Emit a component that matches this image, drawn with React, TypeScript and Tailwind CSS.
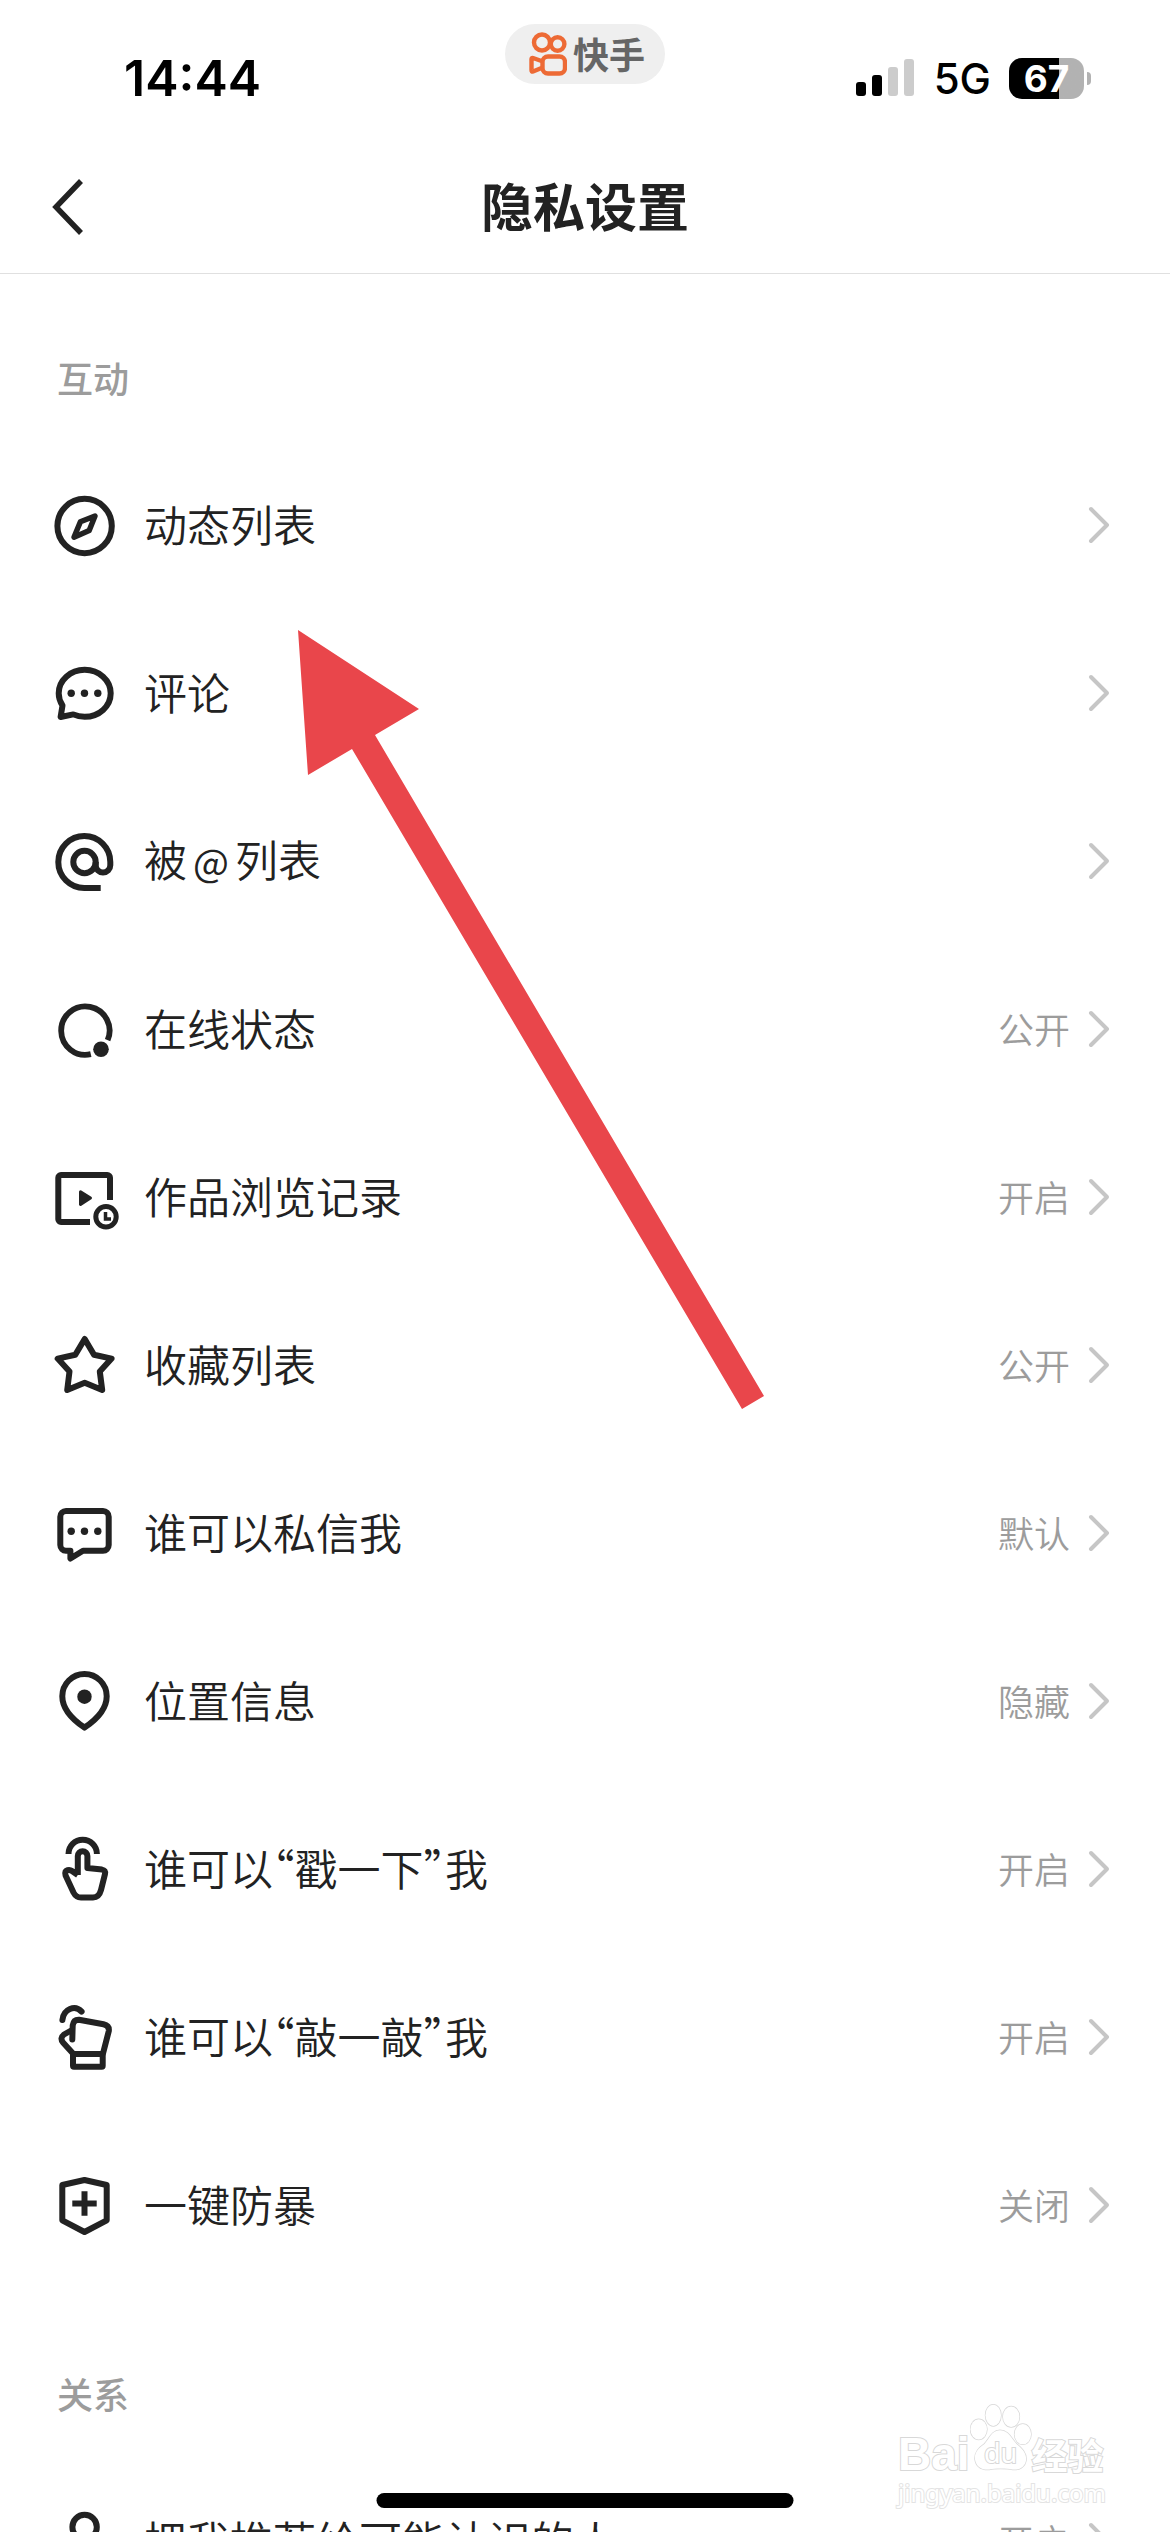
import type { ReactNode } from "react";

type Row = { label: ReactNode; value?: string; icon: ReactNode };

function Icon({ children }: { children: ReactNode }) {
  return (
    <svg
      viewBox="0 0 72 72"
      className="size-18 shrink-0 overflow-visible"
      fill="none"
      stroke="currentColor"
      strokeWidth="6"
      strokeLinejoin="round"
      aria-hidden="true"
    >
      {children}
    </svg>
  );
}

function Dots({ y }: { y: number }) {
  return (
    <g fill="currentColor" stroke="none">
      <circle cx="23.2" cy={y} r="3.7" />
      <circle cx="36.5" cy={y} r="3.7" />
      <circle cx="49.8" cy={y} r="3.7" />
    </g>
  );
}

const interaction: Row[] = [
  {
    label: "动态列表",
    icon: (
      <Icon>
        <circle cx="36.6" cy="36" r="27.2" />
        <path d="M47 26L41.2 40.6L26 47.2L32.4 31.8Z" strokeWidth="5.5" />
      </Icon>
    ),
  },
  {
    label: "评论",
    icon: (
      <Icon>
        <path d="M36.7 11.8c14.4 0 26 10.500 26 23.500s-11.600 23.500-26 23.500c-4 0-8-.8-11.400-2.400L12.600 59l1.900-11.500c-2.400-3.600-3.800-7.700-3.800-12.200 0-13 11.600-23.500 26-23.500z" />
        <Dots y={35.3} />
      </Icon>
    ),
  },
  {
    label: (
      <>
        被<span className="mx-1.5 text-[38px] font-normal">@</span>列表
      </>
    ),
    icon: (
      <Icon>
        <circle cx="36.5" cy="36" r="11.2" />
        <path d="M52.7 62H36.300A26 26 0 1 1 62.300 36V39.300A7.300 7.300 0 0 1 47.700 39.300V36" />
      </Icon>
    ),
  },
  {
    label: "在线状态",
    value: "公开",
    icon: (
      <Icon>
        <path d="M42.800 60.200A24.200 24.200 0 1 1 59.600 46.200" strokeWidth="5.8" />
        <circle cx="53" cy="55.3" r="7.8" fill="currentColor" stroke="none" />
      </Icon>
    ),
  },
  {
    label: "作品浏览记录",
    value: "开启",
    icon: (
      <Icon>
        <path d="M42 60H13a2.700 2.700 0 0 1-2.700-2.700V15.700A2.700 2.700 0 0 1 13 13H59.300A2.700 2.700 0 0 1 62 15.700V38" />
        <path d="M32.500 29.800L42.500 36L32.500 42.500Z" fill="currentColor" strokeWidth="3" />
        <circle cx="58" cy="54.700" r="10.200" strokeWidth="5" />
        <path d="M57.500 50V57H63" strokeWidth="3.500" strokeLinejoin="miter" />
      </Icon>
    ),
  },
  {
    label: "收藏列表",
    value: "公开",
    icon: (
      <Icon>
        <path d="M36.700 9L46 24.800L63.600 28.600L51.800 41.500L54.200 60L36.700 52.800L19.200 60L21.500 41.500L9.700 28.600L27.300 24.800Z" />
      </Icon>
    ),
  },
  {
    label: "谁可以私信我",
    value: "默认",
    icon: (
      <Icon>
        <path d="M22.400 52.700H18a5.700 5.700 0 0 1-5.700-5.700V18.700A5.700 5.700 0 0 1 18 13H55a5.700 5.700 0 0 1 5.700 5.700V47a5.700 5.700 0 0 1-5.700 5.700H35L22.400 60.500Z" />
        <Dots y={33.3} />
      </Icon>
    ),
  },
  {
    label: "位置信息",
    value: "隐藏",
    icon: (
      <Icon>
        <path d="M36.500 61.600C23 52.500 14.300 41.500 14.300 30.200a22.200 22.200 0 0 1 44.400 0C58.700 41.500 50 52.500 36.500 61.600Z" />
        <circle cx="36.500" cy="30.700" r="7.200" fill="currentColor" stroke="none" />
      </Icon>
    ),
  },
  {
    label: "谁可以“戳一下”我",
    value: "开启",
    icon: (
      <Icon>
        <path d="M20.500 20a14.200 14.200 0 0 1 28.400 0" />
        <path d="M29.800 41V22a4.800 4.800 0 0 1 9.600 0V34L54 35.600Q57.800 36.200 57 40L53 56Q51 63.400 45 63.500H33Q28 63.400 25.500 58.500L17.600 41.500Q16.500 37 19.500 36.200Q22 35.500 24 37L29.800 41" />
      </Icon>
    ),
  },
  {
    label: "谁可以“敲一敲”我",
    value: "开启",
    icon: (
      <Icon>
        <path d="M14.400 18C15.500 7 27 2.500 33.600 9.600" strokeLinecap="round" />
        <path d="M24.300 37.500L24.700 23.500Q25.500 17.500 31 17.700L55.500 22.200Q61.500 23.500 60.800 29L55 51.500" strokeLinecap="round" />
        <path d="M24 28L16 32.500Q11.500 36 15 40.500L25 51.500" />
        <rect x="25" y="52" width="29.700" height="12.700" rx="1" />
      </Icon>
    ),
  },
  {
    label: "一键防暴",
    value: "关闭",
    icon: (
      <Icon>
        <path d="M36.500 10L58.700 15V50.300L36.500 62L14.300 50.300V15Z" />
        <path d="M24.300 33.500H48.700M36.500 21.300V45.700" />
      </Icon>
    ),
  },
];

const relations: Row[] = [
  {
    label: "把我推荐给可能认识的人",
    value: "开启",
    icon: (
      <Icon>
        <circle cx="36.600" cy="21" r="12.200" />
        <path d="M12 62C14 46 24 40 36.600 40S59 46 61 62Z" />
      </Icon>
    ),
  },
];

function Section({ title, rows }: { title: string; rows: Row[] }) {
  return (
    <section>
      <h2 className="px-[57px] pt-[77px] pb-[39px] text-[36px] leading-[52px] font-medium text-[#9c9c9c]">{title}</h2>
      <ul>
        {rows.map((row, i) => (
          <li key={i}>
            <button type="button" className="flex h-42 w-full items-center px-12 text-left text-[#222]">
              {row.icon}
              <span className="ml-6 flex-1 pb-1.5 text-[43px] leading-[60px] font-[350] [font-feature-settings:'halt']">{row.label}</span>
              {row.value && <span className="pb-1 text-[36px] leading-[52px] font-[350] text-[#9c9c9c]">{row.value}</span>}
              <svg viewBox="0 0 24 40" className="mr-3 ml-4 h-10 w-6" fill="none" stroke="#c6c6c6" strokeWidth="4" strokeLinecap="round" strokeLinejoin="round" aria-hidden="true">
                <path d="M5 3L21 19L5 35" />
              </svg>
            </button>
          </li>
        ))}
      </ul>
    </section>
  );
}

function StatusBar() {
  return (
    <div className="grid h-[141px] grid-cols-3 items-start text-black">
      <div className="pt-12 pl-31 font-['Inter',sans-serif] text-[50px] leading-[60px] font-semibold">14:44</div>
      <div className="mt-6 flex h-15 w-40 items-center gap-1.5 justify-self-center rounded-full bg-[#efefef] pl-6">
        <svg viewBox="0 0 38 44" className="h-11 w-[38px] shrink-0" fill="none" stroke="#ed6a35" strokeWidth="4.400" strokeLinejoin="round" aria-hidden="true">
          <circle cx="13" cy="10.500" r="8" />
          <circle cx="28.600" cy="12" r="6.800" />
          <rect x="13.500" y="24.500" width="22.500" height="17" rx="5.500" />
          <path d="M12.500 29L4 26Q2.500 25.500 2.500 27V38Q2.500 40 4 39.500L12.500 36" />
        </svg>
        <span className="pb-0.5 text-[36px] leading-[52px] font-bold whitespace-nowrap text-[#666]">快手</span>
      </div>
      <div className="flex items-center justify-end pt-12 pr-[79px] font-['Inter',sans-serif]">
        <svg viewBox="0 0 58 38" className="h-[38px] w-[58px]" aria-label="信号" role="img">
          <rect x="0" y="23" width="10" height="14" rx="3" />
          <rect x="16" y="16" width="10" height="21" rx="3" />
          <rect x="32" y="8" width="10" height="29" rx="3" fill="#ccc" />
          <rect x="48" y="0" width="10" height="37" rx="3" fill="#ccc" />
        </svg>
        <span className="ml-5 pt-0.5 text-[42px] leading-[58px] font-medium">5G</span>
        <span className="ml-[18px] flex h-[41px] w-[75px] items-center justify-center rounded-[13px] bg-linear-to-r from-black from-67% to-[#b2b2b2] to-67% text-[37px] leading-[41px] font-bold text-white">
          67
        </span>
        <span className="ml-[3px] h-[13px] w-1 rounded-r-full bg-[#b2b2b2]" />
      </div>
    </div>
  );
}

function Pointer() {
  return (
    <svg viewBox="0 0 466 779" className="pointer-events-none absolute top-[630px] left-[298px] h-[779px] w-[466px]" fill="#e9464b" aria-hidden="true">
      <path d="M0 0L121 79L77 105L466 766L444 779L54 119L10 145Z" />
    </svg>
  );
}

function Watermark() {
  return (
    <div className="pointer-events-none absolute right-16 bottom-6 w-[208px] font-['Noto_Sans',sans-serif] whitespace-nowrap text-white [paint-order:stroke] [-webkit-text-stroke:2px_#d8d8d8]">
      <div className="flex h-[76px] items-end">
        <span className="font-['Liberation_Sans',sans-serif] text-[46px] leading-[48px] font-bold">Bai</span>
        <div className="relative h-[76px] w-[62px] shrink-0">
          <svg viewBox="0 0 64 76" className="size-full" fill="#fff" stroke="#d8d8d8" strokeWidth="1.500" aria-hidden="true">
            <ellipse cx="9" cy="27" rx="8.500" ry="10.500" />
            <ellipse cx="24" cy="12.500" rx="8" ry="11" />
            <ellipse cx="42.500" cy="14" rx="8.500" ry="10.500" />
            <ellipse cx="54.500" cy="32" rx="8.500" ry="10.500" />
            <path d="M31 28C40 28 43 37 48 42C54 47 58 51 58 58C57 66 51 69 44 68.500C38 67 25 67 20 68.500C11 69 6 65 5 57C5 50 9 46 15 42C20 37 22 28 31 28Z" />
          </svg>
          <span className="absolute inset-x-0 bottom-2 text-center text-[27px] leading-[34px]">du</span>
        </div>
        <span className="font-['Noto_Sans_CJK_SC',sans-serif] text-[36px] leading-[48px] font-bold">经验</span>
      </div>
      <div className="text-[24px] leading-[30px] [-webkit-text-stroke:2px_#e4e4e4]">jingyan.baidu.com</div>
    </div>
  );
}

export default function App() {
  return (
    <div lang="zh-CN" className="relative flex h-screen flex-col overflow-hidden bg-white font-['Noto_Sans_CJK_SC',sans-serif]">
      <StatusBar />
      <header className="grid h-[133px] shrink-0 grid-cols-[120px_1fr_120px] items-center border-b border-[#e0e0e0] text-[#222]">
        <button type="button" aria-label="返回" className="pl-12">
          <svg viewBox="0 0 40 60" className="h-15 w-10" fill="none" stroke="currentColor" strokeWidth="5.500" aria-hidden="true">
            <path d="M33 4L8 30L33 56" />
          </svg>
        </button>
        <h1 className="pb-1 text-center text-[52px] leading-[72px] font-bold">隐私设置</h1>
      </header>
      <main className="min-h-0 flex-1 overflow-hidden">
        <Section title="互动" rows={interaction} />
        <Section title="关系" rows={relations} />
      </main>
      <Pointer />
      <Watermark />
      <div className="absolute bottom-6 left-1/2 h-[15px] w-[417px] -translate-x-1/2 rounded-full bg-black" />
    </div>
  );
}
